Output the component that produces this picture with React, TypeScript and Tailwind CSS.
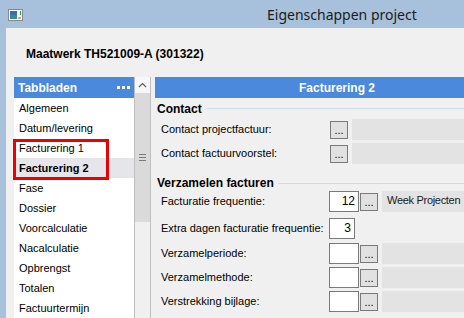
const sans = { fontFamily: '"Liberation Sans", Arial, sans-serif' }

const tabs = [
  'Algemeen',
  'Datum/levering',
  'Facturering 1',
  'Facturering 2',
  'Fase',
  'Dossier',
  'Voorcalculatie',
  'Nacalculatie',
  'Opbrengst',
  'Totalen',
  'Factuurtermijn'
]

function WindowIcon() {
  return (
    <svg width="15" height="12" viewBox="0 0 15 12">
      <rect x="0.5" y="0.5" width="14" height="11" fill="#f4f4f4" stroke="#8a8a8a" />
      <rect x="2" y="2" width="7" height="8" fill="#3a8a8a" />
      <rect x="2" y="2" width="7" height="4" fill="#3c6fb0" />
      <rect x="10" y="8" width="3" height="2" fill="#b0b0b0" />
      <rect x="12" y="2" width="1" height="4" fill="#2a9a3a" />
    </svg>
  )
}

function DotsButton() {
  return (
    <div className="w-[18px] h-[18px] shrink-0 bg-[#e1e1e1] border border-[#7a7a7a] flex items-end justify-center pb-[2px] text-[11px] leading-none text-black">
      ...
    </div>
  )
}

function Label({ children }: { children: React.ReactNode }) {
  return <div className="w-[174px] shrink-0 pl-[6px] text-[11px] text-black whitespace-nowrap">{children}</div>
}

function Heading({ children, cls }: { children: React.ReactNode; cls: string }) {
  return (
    <div className={`flex items-center pl-[2px] ${cls}`}>
      <span className="text-[12px] font-bold text-black">{children}</span>
      <div className="flex-1 ml-[4px] border-t border-[#cfdbe6]" />
    </div>
  )
}

function ContactRow({ label, cls }: { label: string; cls: string }) {
  return (
    <div className={`flex items-center h-[21px] ${cls}`}>
      <Label>{label}</Label>
      <div className="ml-[1px]">
        <DotsButton />
      </div>
      <div className="ml-[4px] flex-1 h-[21px] bg-[#e3e3e3]" />
    </div>
  )
}

function InputRow({
  label,
  value,
  cls,
  field,
  short
}: {
  label: string
  value?: string
  cls: string
  field?: string
  short?: boolean
}) {
  return (
    <div className={`flex items-center h-[21px] ${cls}`}>
      <Label>{label}</Label>
      <div
        className={`${short ? 'w-[26px]' : 'w-[30px]'} h-[21px] shrink-0 bg-white border border-[#7a7a7a] text-[12px] text-right pr-[3px] leading-[19px]`}
      >
        {value}
      </div>
      {!short && (
        <>
          <div className="ml-[1px]">
            <DotsButton />
          </div>
          <div className="ml-[4px] flex-1 h-[21px] bg-[#e3e3e3] pl-[5px] text-[11px] tracking-[-0.3px] leading-[19px] text-[#1a1a1a] whitespace-nowrap">
            {field}
          </div>
        </>
      )}
    </div>
  )
}

export default function App() {
  return (
    <div className="w-[464px] h-[318px] overflow-hidden bg-[#a7c1dd] flex flex-col" style={sans}>
      <div className="h-[28px] shrink-0 flex items-center">
        <div className="ml-[8px] mt-[1px]">
          <WindowIcon />
        </div>
        <div
          className="ml-[244px] text-[14px] text-[#1b1b1b] whitespace-nowrap"
          style={{ fontFamily: '"Noto Sans", "Open Sans", sans-serif' }}
        >
          Eigenschappen project
        </div>
      </div>

      <div className="flex-1 ml-[6px] bg-[#f0f0f0] flex flex-col min-h-0">
        <div className="h-[49px] shrink-0 flex items-center pl-[20px] pt-[3px]">
          <span className="text-[12px] font-bold text-black">Maatwerk TH521009-A (301322)</span>
        </div>

        <div className="flex-1 flex pl-[8px] min-h-0">
          {/* tab list */}
          <div className="w-[120px] shrink-0 flex flex-col relative">
            <div className="h-[21px] shrink-0 bg-[#4a89dc] flex items-center justify-between pl-[4px] pr-[4px]">
              <span className="text-[12px] font-bold text-white">Tabbladen</span>
              <div className="flex gap-[2px]">
                <div className="w-[3px] h-[3px] bg-white" />
                <div className="w-[3px] h-[3px] bg-white" />
                <div className="w-[3px] h-[3px] bg-white" />
              </div>
            </div>
            <div className="flex-1 bg-white flex flex-col">
              {tabs.map(t => (
                <div
                  key={t}
                  className={`h-[20px] shrink-0 flex items-center pl-[5px] text-[11px] text-black ${
                    t === 'Facturering 2' ? 'bg-[#e6e6ea] font-bold' : ''
                  }`}
                >
                  {t}
                </div>
              ))}
            </div>
            <div className="absolute left-[-1px] top-[62px] w-[96px] h-[41px] border-[3px] border-[#ee0000]" />
          </div>

          {/* scrollbar */}
          <div className="w-[17px] shrink-0 flex flex-col border-l border-r border-[#bfbfbf] bg-[#f0f0f0]">
            <div className="h-[16px] shrink-0 bg-[#f7f7f7] flex items-center justify-center">
              <svg width="9" height="6" viewBox="0 0 9 6">
                <path d="M1 5 L4.5 1.5 L8 5" fill="none" stroke="#606060" strokeWidth="1.2" />
              </svg>
            </div>
            <div className="h-[129px] shrink-0 bg-[#dadada] flex flex-col items-center justify-center gap-[2px]">
              <div className="w-[7px] h-[1px] bg-[#7a7a7a]" />
              <div className="w-[7px] h-[1px] bg-[#7a7a7a]" />
              <div className="w-[7px] h-[1px] bg-[#7a7a7a]" />
            </div>
          </div>

          {/* detail panel */}
          <div className="w-[364px] shrink-0 ml-[4px] flex flex-col">
            <div className="h-[21px] shrink-0 bg-[#4a89dc] flex items-center justify-center">
              <span className="text-[12px] font-bold text-white">Facturering 2</span>
            </div>
            <Heading cls="h-[21px]">Contact</Heading>
            <ContactRow label="Contact projectfactuur:" cls="" />
            <ContactRow label="Contact factuurvoorstel:" cls="mt-[3px]" />
            <Heading cls="h-[16px] mt-[11px]">Verzamelen facturen</Heading>
            <InputRow label="Facturatie frequentie:" value="12" field="Week Projecten" cls="" />
            <InputRow label="Extra dagen facturatie frequentie:" value="3" short cls="mt-[6px]" />
            <InputRow label="Verzamelperiode:" cls="mt-[4px]" />
            <InputRow label="Verzamelmethode:" cls="mt-[3px]" />
            <InputRow label="Verstrekking bijlage:" cls="mt-[3px]" />
          </div>
        </div>
      </div>
    </div>
  )
}
